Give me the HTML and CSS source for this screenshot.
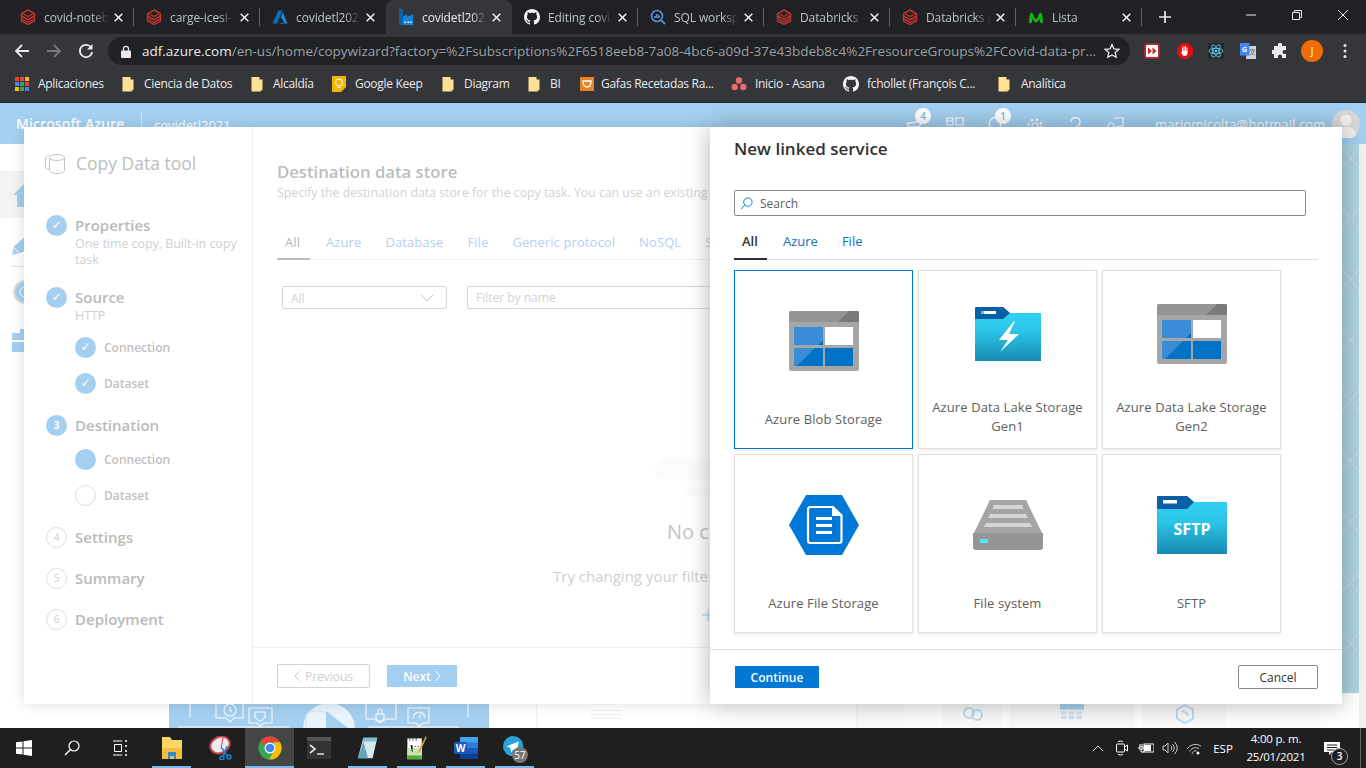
FILE: index.html
```html
<!DOCTYPE html>
<html lang="es">
<head>
<meta charset="utf-8">
<title>Copy Data tool</title>
<link rel="stylesheet" href="styles.css">
</head>
<body>
<svg class="sprite" aria-hidden="true">
  <defs>
    <linearGradient id="folderFill" x1="0" y1="0" x2="0" y2="1"><stop offset="0" stop-color="#32d4f5"/><stop offset=".45" stop-color="#2cc4e8"/><stop offset="1" stop-color="#198ab3"/></linearGradient>
    <symbol id="i-close" viewBox="0 0 9 9"><path d="m.7.7 7.600 7.600M8.300.7.7 8.300" stroke="#e8eaed" stroke-width="1.600"/></symbol>
    <symbol id="i-bricks" viewBox="0 0 16 16"><path d="M8 1 14.500 4.600V7L8 10.600 1.500 7V4.600z" fill="none" stroke="#c8352b" stroke-width="1.500"/><path d="M1.500 7.500v2.200L8 13.300l6.500-3.600V7.500M1.500 10.200v2L8 15.400l6.500-3.200v-2" fill="none" stroke="#c8352b" stroke-width="1.300"/><path d="M3 4.700 8 7.500l5-2.800" fill="none" stroke="#c8352b" stroke-width="1.200"/></symbol>
    <symbol id="i-azure" viewBox="0 0 16 16"><path d="M6.300 1.500h4L5.200 14.500H.5z" fill="#0a6cc0"/><path d="M10.800 3 15.500 14.500H6.500l6-1.200L8.700 8.500z" fill="#1e88d8"/></symbol>
    <symbol id="i-factory" viewBox="0 0 16 16"><path d="M1 0h4v7.500L9 5v3l6-3v11H1z" fill="#1382d8"/><path d="M1 0h4v16H1z" fill="#0c62a8"/><path d="M6.500 12.500h1.500V14H6.500zM9.500 12.500H11V14H9.500zM12 12.500h1.500V14H12z" fill="#fff"/></symbol>
    <symbol id="i-github" viewBox="0 0 16 16"><path fill="#f1f3f4" d="M8 0C3.580 0 0 3.580 0 8c0 3.540 2.290 6.530 5.470 7.590.4.070.55-.17.55-.38 0-.19-.01-.82-.01-1.490-2.010.37-2.530-.49-2.690-.94-.09-.23-.48-.94-.82-1.130-.28-.15-.68-.52-.01-.53.63-.01 1.080.58 1.230.82.72 1.210 1.870.87 2.330.66.070-.52.28-.87.51-1.070-1.780-.2-3.640-.89-3.640-3.950 0-.87.31-1.590.82-2.150-.08-.2-.36-1.020.08-2.120 0 0 .67-.21 2.200.82.64-.18 1.320-.27 2-.27s1.360.09 2 .27c1.530-1.040 2.200-.82 2.200-.82.44 1.100.16 1.920.08 2.120.51.56.82 1.270.82 2.150 0 3.070-1.870 3.750-3.650 3.950.29.25.54.73.54 1.480 0 1.070-.01 1.930-.01 2.200 0 .21.15.46.55.38A8.010 8.010 0 0 0 16 8c0-4.420-3.580-8-8-8z"/></symbol>
    <symbol id="i-sql" viewBox="0 0 16 16"><circle cx="7" cy="7" r="5.500" fill="none" stroke="#5a8fe0" stroke-width="1.600"/><path d="m11 11 4 4" stroke="#5a8fe0" stroke-width="1.800"/><path d="M5 9V7M7 9V5M9 9V6.500" stroke="#8ab4f8" stroke-width="1.200"/></symbol>
    <symbol id="i-movistar" viewBox="0 0 16 16"><path d="M1 13.500C1 8 2 3.500 3.500 3.500 5.500 3.500 6 10 8 10s2.500-6.500 4.500-6.500C14 3.500 15 8 15 13.500c0 1-2.500 1-2.800 0-.2-1.500-.4-3-.7-4-.5 1.500-1.500 4-3.500 4s-3-2.500-3.500-4c-.3 1-.5 2.500-.7 4-.3 1-2.800 1-2.800 0z" fill="#12b312"/></symbol>
    <symbol id="i-folder" viewBox="0 0 12 16"><path d="M.5 1h8v2.500h3v10l-2 2H.5z" fill="#fde293"/><path d="M9.500 15.500v-2h2z" fill="#c9a94f"/></symbol>
    <symbol id="i-blob" viewBox="0 0 70 60"><rect width="70" height="60" rx="2" fill="#a5a6a7"/><path d="M2 0h66a2 2 0 0 1 2 2v9H0V2a2 2 0 0 1 2-2z" fill="#959595"/><path d="M60 0h8a2 2 0 0 1 2 2v9H49z" fill="#7a7a7a"/><rect x="5" y="16" width="29" height="18" fill="#3b8cd6"/><path d="M34 29v5h-5z" fill="#0072c6"/><rect x="36" y="16" width="28" height="18" fill="#fff"/><rect x="5" y="37" width="29" height="18" fill="#0072c6"/><rect x="36" y="37" width="28" height="18" fill="#0072c6"/><path d="M5 37h21L8 55H5z" fill="#3b8cd6"/></symbol>
    <symbol id="i-lake" viewBox="0 0 66 54"><path d="M0 0h28l7 6h31v48H0z" fill="url(#folderFill)"/><path d="M1 0h27l7 6-7 6H0V1z" fill="#0a5ea6"/><rect x="6" y="4" width="3" height="3" fill="#32d4f5"/><rect x="9" y="4" width="12" height="3" fill="#fff"/><path d="M39 14 24 33h9l-8 12 19-18h-10l6-13z" fill="#fff"/></symbol>
    <symbol id="i-hex" viewBox="0 0 70 60"><path d="M17 0h36l17 30-17 30H17L0 30z" fill="#0078d7"/><path d="M19 14.500a2.500 2.500 0 0 1 2.500-2.500H44l8.500 8.500V45.500A2.500 2.500 0 0 1 50 48H21.500A2.500 2.500 0 0 1 19 45.500z" fill="none" stroke="#fff" stroke-width="2.200"/><path d="M27 22h16v3H27zM27 29h16v3H27zM27 36h16v3H27z" fill="#fff"/><path d="M43 12v9h9.500" fill="#fff"/></symbol>
    <symbol id="i-disk" viewBox="0 0 70 50"><path d="M16 2a2 2 0 0 1 2-2h34a2 2 0 0 1 2 2l16 33H0z" fill="#a4a5a6"/><path d="M0 33h70v14a3 3 0 0 1-3 3H3a3 3 0 0 1-3-3z" fill="#959595"/><path d="M21 5h28l1.500 4h-31zM17 14h36l2 4H15zM13 23h44l2 4H11z" fill="#d6d6d6"/><rect x="7" y="39" width="8" height="4" fill="#50e6ff"/></symbol>
    <symbol id="i-sftp" viewBox="0 0 70 58"><path d="M0 0h30l7 6h33v52H0z" fill="url(#folderFill)"/><path d="M1 0h29l7 6-7 7H0V1z" fill="#0a5ea6"/><rect x="6" y="4" width="14" height="3.500" fill="#fff"/></symbol>
  </defs>
</svg>

<nav class="tabstrip">
  <div class="tab"><svg class="fav"><use href="#i-bricks"/></svg><span class="tab-title">covid-noteb</span><svg class="tab-x"><use href="#i-close"/></svg></div>
  <div class="tab"><svg class="fav"><use href="#i-bricks"/></svg><span class="tab-title">carge-icesi-</span><svg class="tab-x"><use href="#i-close"/></svg></div>
  <div class="tab tab-before-active"><svg class="fav"><use href="#i-azure"/></svg><span class="tab-title">covidetl202</span><svg class="tab-x"><use href="#i-close"/></svg></div>
  <div class="tab tab-active"><svg class="fav"><use href="#i-factory"/></svg><span class="tab-title">covidetl202</span><svg class="tab-x"><use href="#i-close"/></svg></div>
  <div class="tab"><svg class="fav"><use href="#i-github"/></svg><span class="tab-title">Editing covi</span><svg class="tab-x"><use href="#i-close"/></svg></div>
  <div class="tab"><svg class="fav"><use href="#i-sql"/></svg><span class="tab-title">SQL worksp</span><svg class="tab-x"><use href="#i-close"/></svg></div>
  <div class="tab"><svg class="fav"><use href="#i-bricks"/></svg><span class="tab-title">Databricks -</span><svg class="tab-x"><use href="#i-close"/></svg></div>
  <div class="tab"><svg class="fav"><use href="#i-bricks"/></svg><span class="tab-title">Databricks (</span><svg class="tab-x"><use href="#i-close"/></svg></div>
  <div class="tab"><svg class="fav"><use href="#i-movistar"/></svg><span class="tab-title">Lista</span><svg class="tab-x"><use href="#i-close"/></svg></div>
  <svg class="new-tab" viewBox="0 0 12 12"><path d="M6 0v12M0 6h12" stroke="#e8eaed" stroke-width="1.700"/></svg>
  <div class="winctl">
    <svg viewBox="0 0 12 12"><path d="M1 6h10" stroke="#e8eaed"/></svg>
    <svg viewBox="0 0 12 12"><path d="M1.500 3.500h7v7h-7zM3.500 3.500v-2h7v7h-2" fill="none" stroke="#e8eaed"/></svg>
    <svg viewBox="0 0 12 12"><path d="m1 1 10 10M11 1 1 11" stroke="#e8eaed"/></svg>
  </div>
</nav>

<div class="toolbar">
  <svg class="nav-btn" viewBox="0 0 16 16"><path d="M15 8H2M8 2 2 8l6 6" fill="none" stroke="#e8eaed" stroke-width="1.800"/></svg>
  <svg class="nav-btn" viewBox="0 0 16 16"><path d="M1 8h13M8 2l6 6-6 6" fill="none" stroke="#77797d" stroke-width="1.800"/></svg>
  <svg class="nav-btn" viewBox="0 0 16 16"><path d="M13.500 5A6.200 6.200 0 1 0 14.200 9" fill="none" stroke="#e8eaed" stroke-width="1.800"/><path d="M14.500 1v5.500H9z" fill="#e8eaed"/></svg>
  <div class="omnibox">
    <svg class="lock" viewBox="0 0 10 13"><path d="M2.500 6V3.800a2.500 2.500 0 0 1 5 0V6" fill="none" stroke="#e8eaed" stroke-width="1.300"/><rect y="5.500" width="10" height="7.500" rx="1" fill="#e8eaed"/></svg>
    <div class="url"><b>adf.azure.com</b>/en-us/home/copywizard?factory=%2Fsubscriptions%2F6518eeb8-7a08-4bc6-a09d-37e43bdeb8c4%2FresourceGroups%2FCovid-data-pr...</div>
    <svg class="star" viewBox="0 0 16 16"><path d="m8 1.500 2 4.400 4.800.5-3.600 3.200 1 4.700L8 11.900l-4.200 2.400 1-4.700L1.200 6.400 6 5.900z" fill="none" stroke="#e8eaed" stroke-width="1.300"/></svg>
  </div>
  <div class="ext">
    <svg viewBox="0 0 16 16"><rect x="1" y="1" width="14" height="14" rx="2" fill="#fff" stroke="#a92a2a" stroke-width="2"/><path d="M4 4.500 8 8l-4 3.500zM8.500 4.500l4 3.500-4 3.500z" fill="#c62828"/></svg>
    <svg viewBox="0 0 16 16"><path d="M5 0h6l5 5v6l-5 5H5l-5-5V5z" fill="#e01010"/><path d="M5 8V4.500h1V8h.5V3h1v5H8V3.200h1V8h.5V4.500h1V10c0 2-1 3-2.700 3C6 13 5.500 12 3.800 9.500L5 9z" fill="#fff"/></svg>
    <svg viewBox="0 0 16 16"><rect width="16" height="16" fill="#23272a"/><g fill="none" stroke="#61dafb" stroke-width=".8"><ellipse cx="8" cy="8" rx="7" ry="2.700"/><ellipse cx="8" cy="8" rx="7" ry="2.700" transform="rotate(60 8 8)"/><ellipse cx="8" cy="8" rx="7" ry="2.700" transform="rotate(120 8 8)"/></g><circle cx="8" cy="8" r="1.300" fill="#61dafb"/></svg>
    <svg viewBox="0 0 16 16"><path d="M7 3h9v13H6z" fill="#d0d4d8"/><path d="M0 0h9.500v12.500H0z" fill="#4285f4"/><text x="2" y="9" class="ext-g">G</text><path d="M10 7h5M12.500 6v1.500M14 8c-.5 2-2 3.500-3.500 4M11 8.500c.5 1.500 2 3 3.500 3.500" stroke="#6b7075" fill="none"/></svg>
    <svg viewBox="0 0 16 16"><path d="M6 1.500a2 2 0 0 1 4 0V3h4v4h-1.500a2 2 0 0 0 0 4H14v4H10v-1.500a2 2 0 0 0-4 0V15H2v-4H.5a2 2 0 0 1 0-4H2V3h4z" fill="#e8eaed"/></svg>
    <span class="avatar-j">J</span>
    <svg viewBox="0 0 16 16"><circle cx="8" cy="2.500" r="1.500" fill="#e8eaed"/><circle cx="8" cy="8" r="1.500" fill="#e8eaed"/><circle cx="8" cy="13.500" r="1.500" fill="#e8eaed"/></svg>
  </div>
</div>

<div class="bookmarks">
  <div class="bm"><svg class="bm-apps" viewBox="0 0 14 14"><g><rect width="4" height="4" fill="#ea4335"/><rect x="5" width="4" height="4" fill="#ea4335"/><rect x="10" width="4" height="4" fill="#fbbc04"/><rect y="5" width="4" height="4" fill="#4285f4"/><rect x="5" y="5" width="4" height="4" fill="#34a853"/><rect x="10" y="5" width="4" height="4" fill="#ea4335"/><rect y="10" width="4" height="4" fill="#fbbc04"/><rect x="5" y="10" width="4" height="4" fill="#34a853"/><rect x="10" y="10" width="4" height="4" fill="#4285f4"/></g></svg><span>Aplicaciones</span></div>
  <div class="bm"><svg class="bm-folder"><use href="#i-folder"/></svg><span>Ciencia de Datos</span></div>
  <div class="bm"><svg class="bm-folder"><use href="#i-folder"/></svg><span>Alcaldía</span></div>
  <div class="bm"><svg class="bm-ico" viewBox="0 0 16 16"><path d="M1 1a1 1 0 0 1 1-1h12a1 1 0 0 1 1 1v10l-5 5H2a1 1 0 0 1-1-1z" fill="#f5b400"/><circle cx="8" cy="6.500" r="3.500" fill="none" stroke="#fff"/><path d="M6.500 11.500h3" stroke="#fff"/></svg><span>Google Keep</span></div>
  <div class="bm"><svg class="bm-folder"><use href="#i-folder"/></svg><span>Diagram</span></div>
  <div class="bm"><svg class="bm-folder"><use href="#i-folder"/></svg><span>BI</span></div>
  <div class="bm"><svg class="bm-ico bm-ico-glass" viewBox="0 0 14 16"><path d="M0 1h14v14H0z" fill="#e8832a"/><path d="M3 5h8c0 4-1.500 6-4 6S3 9 3 5z" fill="none" stroke="#fff" stroke-width="1.300"/></svg><span>Gafas Recetadas Ra...</span></div>
  <div class="bm"><svg class="bm-ico" viewBox="0 0 16 16"><circle cx="8" cy="4.500" r="3.200" fill="#f06a6a"/><circle cx="3.700" cy="11" r="3.200" fill="#f06a6a"/><circle cx="12.300" cy="11" r="3.200" fill="#f06a6a"/></svg><span>Inicio - Asana</span></div>
  <div class="bm"><svg class="bm-ico"><use href="#i-github"/></svg><span>fchollet (François C...</span></div>
  <div class="bm"><svg class="bm-folder bm-folder-last"><use href="#i-folder"/></svg><span>Analítica</span></div>
</div>

<main class="app">
  <header class="az-header">
    <strong class="az-brand">Microsoft Azure</strong>
    <span class="az-factory">covidetl2021</span>
    <div class="az-tools">
      <span class="tool"><svg viewBox="0 0 18 18"><path d="M1 6.500 16 4l-3 6H3zM3 13h10" fill="none" stroke="#fff" stroke-width="1.300"/></svg><em class="badge">4</em></span>
      <span class="tool"><svg viewBox="0 0 18 18"><path d="M1 1h6v7H1zM1 4h6M10 1h7v7h-7zM1 11h7v6H1zM11 11h6v6h-6z" fill="none" stroke="#fff" stroke-width="1.200"/></svg></span>
      <span class="tool"><svg viewBox="0 0 18 18"><path d="M3.500 18V6a5.500 5.500 0 0 1 11 0v12" fill="none" stroke="#fff" stroke-width="1.300"/></svg><em class="badge">1</em></span>
      <span class="tool"><svg viewBox="0 0 18 18"><circle cx="9" cy="9" r="3" fill="none" stroke="#fff" stroke-width="1.200"/><circle cx="9" cy="9" r="6.500" fill="none" stroke="#fff" stroke-width="2.200" stroke-dasharray="2.500 2.600"/></svg></span>
      <span class="tool"><svg viewBox="0 0 18 18"><path d="M5 5a4.500 4.500 0 1 1 6.500 4C10 10 9 11 9 14" fill="none" stroke="#fff" stroke-width="1.300"/></svg></span>
      <span class="tool"><svg viewBox="0 0 18 18"><path d="M8 1h9v8h-4l-2 2V9" fill="none" stroke="#fff" stroke-width="1.200"/><circle cx="5" cy="9" r="3" fill="none" stroke="#fff" stroke-width="1.200"/><path d="M1 17c0-3 2-4 4-4s4 1 4 4" fill="none" stroke="#fff" stroke-width="1.200"/></svg></span>
    </div>
    <span class="az-user">mariomicolta@hotmail.com</span>
    <svg class="az-avatar" viewBox="0 0 28 28"><circle cx="14" cy="14" r="14" fill="#d8d8d8"/><circle cx="14" cy="10" r="5.500" fill="#f0f0f0"/><path d="M4 25c1-7 5-8 10-8s9 1 10 8a14 14 0 0 1-20 0z" fill="#f0f0f0"/></svg>
  </header>
  <div class="az-body">
    <div class="rail">
      <div class="rail-item rail-home"><svg viewBox="0 0 26 24"><path d="M13 0 26 12h-4v12H5V12H1z" fill="#a4cff0"/></svg></div>
      <div class="rail-item rail-edit"><svg viewBox="0 0 26 18"><path d="M0 18 2 9 13 0h13v9L8 16z" fill="#a4cff0"/><path d="M2 10.500 7 16" stroke="#fff"/></svg></div>
      <div class="rail-item rail-mon"><svg viewBox="0 0 26 24"><circle cx="13" cy="12" r="11" fill="#a4cff0" stroke="#ddd" stroke-width="2"/><circle cx="13" cy="12" r="5" fill="none" stroke="#fff"/></svg></div>
      <div class="rail-item rail-case"><svg viewBox="0 0 26 24"><path d="M0 5h8V1h10v4h8v19H0z" fill="#a4cff0"/><path d="M0 13h26" stroke="#fff" stroke-width="2"/></svg></div>
    </div>
    <div class="home">
      <div class="home-strip">
        <div class="home-white"></div>
        <svg class="home-hero" viewBox="0 0 320 24"><rect width="320" height="24" fill="#a4cff0"/><g fill="none" stroke="#fff" stroke-width="1.100" opacity=".9"><path d="M21 0v13M299 0v13M47 0v14h10l4 4 4-4h9V0M80 4h23v15h-8l-4 3-3-3h-8zM197 0v15h10l4 4 4-4h12V0M239 4h21v15h-6l-4 3-3-3h-8zM10 24v-1h110M200 24v-1h90"/><circle cx="61" cy="6" r="6"/><path d="M61 3v3l2 2M86 8h10v4c0 3-3 4-5 5-2-1-5-2-5-5zM207 10h8v7h-8zM209 10V7a2 2 0 0 1 4 0v3M244 14a6 6 0 0 1 12 0M250 14l2-4"/></g><circle cx="160" cy="25" r="26" fill="#e8f3fc"/><path d="M137 10v14M158 10v14M137 10c2-4 19-4 21 0" stroke="#cfe4f5" fill="none"/><path d="M157 7 179 24h-22z" fill="#a4cff0"/></svg>
        <div class="home-card home-card-a"><i></i><i></i><i></i></div>
        <div class="home-card home-card-b"></div>
        <div class="home-card home-card-c"><svg viewBox="0 0 24 14"><circle cx="8" cy="6" r="5" fill="none" stroke="#bcdcf3" stroke-width="2"/><circle cx="16" cy="8" r="5" fill="none" stroke="#bcdcf3" stroke-width="2"/></svg></div>
        <div class="home-card home-card-d"><svg viewBox="0 0 22 18"><rect width="22" height="5" fill="#a8d0ee"/><path d="M1 8h20M1 12h20" stroke="#cfe4f5" stroke-width="3" stroke-dasharray="5 2"/></svg></div>
        <div class="home-card home-card-e"><svg viewBox="0 0 18 20"><path d="M9 1 17 5.500v9L9 19 1 14.500v-9z" fill="none" stroke="#bcdcf3" stroke-width="2"/><path d="M6 8c3-2 6 3 6 4" fill="none" stroke="#bcdcf3" stroke-width="2"/></svg></div>
      </div>
    </div>
    <div class="teal"></div>
    <div class="page-scroll"></div>
  </div>

  <section class="wizard">
    <div class="wiz-side">
      <div class="wiz-title"><svg viewBox="0 0 20 21"><ellipse cx="12" cy="4.500" rx="7.500" ry="3" fill="#fff" stroke="#c4c4c4"/><path d="M4.500 4.500v13c0 1.600 3.300 3 7.500 3s7.500-1.400 7.500-3v-13" fill="none" stroke="#c4c4c4"/><path d="M4 2.500C2 3 .5 3.500.5 5v9c0 1 1.500 2 4 2.500" fill="none" stroke="#c4c4c4"/></svg><span>Copy Data tool</span></div>
      <div class="step step-first"><span class="dot dot-done">✓</span><b>Properties</b></div>
      <p class="step-sub">One time copy, Built-in copy task</p>
      <div class="step step-source"><span class="dot dot-done">✓</span><b>Source</b></div>
      <p class="step-sub">HTTP</p>
      <div class="sub-step sub-step-first"><span class="dot dot-done">✓</span><span>Connection</span></div>
      <div class="sub-step"><span class="dot dot-done">✓</span><span>Dataset</span></div>
      <div class="step step-next"><span class="dot dot-now">3</span><b>Destination</b></div>
      <div class="sub-step sub-step-first"><span class="dot dot-fill"></span><span>Connection</span></div>
      <div class="sub-step"><span class="dot dot-empty"></span><span>Dataset</span></div>
      <div class="step step-next"><span class="dot dot-empty">4</span><b>Settings</b></div>
      <div class="step step-tail"><span class="dot dot-empty">5</span><b>Summary</b></div>
      <div class="step step-tail"><span class="dot dot-empty">6</span><b>Deployment</b></div>
    </div>
    <div class="wiz-main">
      <div class="wiz-body">
        <h2 class="wiz-h">Destination data store</h2>
        <p class="wiz-desc">Specify the destination data store for the copy task. You can use an existing</p>
        <div class="wiz-tabs"><span class="wt wt-on">All</span><span class="wt">Azure</span><span class="wt">Database</span><span class="wt">File</span><span class="wt">Generic protocol</span><span class="wt">NoSQL</span><span class="wt">S</span></div>
        <div class="wiz-filters">
          <div class="sel"><span>All</span><svg viewBox="0 0 14 8"><path d="m1 1 6 6 6-6" fill="none" stroke="#c4c4c4"/></svg></div>
          <div class="flt">Filter by name</div>
        </div>
        <div class="ghost"></div>
        <div class="ghost-2"></div>
        <p class="empty-a">No c</p>
        <p class="empty-b">Try changing your filte</p>
        <svg class="empty-plus" viewBox="0 0 12 12"><path d="M6 0v12M0 6h12" stroke="#a4cff0"/></svg>
      </div>
      <div class="wiz-foot">
        <span class="btn-prev"><svg viewBox="0 0 6 12"><path d="M5.500 1 1 6l4.500 5" fill="none" stroke="#c8c8c8"/></svg>Previous</span>
        <span class="btn-next">Next<svg viewBox="0 0 6 12"><path d="M.5 1 5 6l-4.500 5" fill="none" stroke="#fff"/></svg></span>
      </div>
    </div>
  </section>

  <aside class="blade">
    <div class="blade-body">
      <h1 class="blade-h">New linked service</h1>
      <div class="search"><svg viewBox="0 0 14 14"><circle cx="8.500" cy="5.500" r="4.500" fill="none" stroke="#0078d4"/><path d="M5 9 1 13" stroke="#0078d4"/></svg><span>Search</span></div>
      <div class="blade-tabs"><span class="bt bt-on">All</span><span class="bt">Azure</span><span class="bt">File</span></div>
      <div class="cards">
        <div class="card card-on"><svg class="ico-blob"><use href="#i-blob"/></svg><span class="card-t">Azure Blob Storage</span></div>
        <div class="card card-two"><svg class="ico-lake"><use href="#i-lake"/></svg><span class="card-t">Azure Data Lake Storage Gen1</span></div>
        <div class="card card-two"><svg class="ico-blob ico-blob-2"><use href="#i-blob"/></svg><span class="card-t">Azure Data Lake Storage Gen2</span></div>
        <div class="card"><svg class="ico-hex"><use href="#i-hex"/></svg><span class="card-t">Azure File Storage</span></div>
        <div class="card"><svg class="ico-disk"><use href="#i-disk"/></svg><span class="card-t">File system</span></div>
        <div class="card"><svg class="ico-sftp" viewBox="0 0 70 58"><use href="#i-sftp"/><text x="35" y="39" class="sftp-t">SFTP</text></svg><span class="card-t">SFTP</span></div>
      </div>
    </div>
    <div class="blade-foot"><span class="btn-go">Continue</span><span class="btn-cancel">Cancel</span></div>
  </aside>
</main>

<footer class="taskbar">
  <div class="tb-cell tb-sys"><svg viewBox="0 0 16 16"><path d="M0 2.300 6.500 1.400V7.500H0zM7.500 1.300 16 0V7.500H7.500zM0 8.500h6.500v6.100L0 13.700zM7.500 8.500H16V16l-8.500-1.200z" fill="#fff"/></svg></div>
  <div class="tb-cell tb-sys"><svg viewBox="0 0 16 16"><circle cx="10" cy="6" r="5" fill="none" stroke="#fff" stroke-width="1.200"/><path d="M6.500 9.500 1 15" stroke="#fff" stroke-width="1.400"/></svg></div>
  <div class="tb-cell tb-sys"><svg viewBox="0 0 16 16"><path d="M1 1h9M1 15h9M2.500 4.500h7v7h-7z" fill="none" stroke="#fff"/><path d="M13 1h2M13 6h2M13 11h2M13 15h2" stroke="#fff" stroke-width="1.500"/></svg></div>
  <div class="tb-app tb-run"><svg viewBox="0 0 24 24"><path d="M2 1h8l2 3h10v19H2z" fill="#fcd462"/><path d="M2 12h20v11H2z" fill="#f4bd3f"/><path d="M8 16h8v7h-2v-3h-4v3H8z" fill="#2d8ecf"/></svg></div>
  <div class="tb-app"><svg viewBox="0 0 24 24"><ellipse cx="11" cy="9" rx="10" ry="8" fill="#eee" stroke="#c8424a" stroke-width="2" transform="rotate(-25 11 9)"/><path d="M14 2 12 13" stroke="#c8424a"/><path d="M13 12 19 21M18 10 14 21" stroke="#1c86d1" stroke-width="1.500"/><circle cx="13" cy="22" r="2" fill="none" stroke="#1c86d1" stroke-width="1.500"/><circle cx="20" cy="21" r="2" fill="none" stroke="#1c86d1" stroke-width="1.500"/></svg></div>
  <div class="tb-app tb-run tb-active"><svg viewBox="0 0 24 24"><circle cx="12" cy="12" r="11.500" fill="#34a853"/><path d="M12 .5a11.500 11.500 0 0 1 10 5.800H12a6 6 0 0 0-5.500 3.500L2.500 5A11.500 11.500 0 0 1 12 .5z" fill="#ea4335"/><path d="M22 6.300A11.500 11.500 0 0 1 11 23.500l5-8.500a6 6 0 0 0-1-8.700z" fill="#fbbc04"/><circle cx="12" cy="12" r="5.500" fill="#fff"/><circle cx="12" cy="12" r="4.300" fill="#4285f4"/></svg></div>
  <div class="tb-app"><svg viewBox="0 0 24 24"><rect y="1" width="24" height="22" rx="1" fill="#333"/><rect y="1" width="24" height="4" fill="#555"/><path d="m3 9 5 4-5 4" fill="none" stroke="#ddd" stroke-width="1.700"/><path d="M10 18h7" stroke="#ddd" stroke-width="1.500"/></svg></div>
  <div class="tb-app tb-run"><svg viewBox="0 0 24 26"><path d="M7 2h15L17 24H1z" fill="#d5e8f0"/><path d="M7 2h15l-1 4H6z" fill="#7cc2da"/><path d="M1 24 7 6l5 18z" fill="#3d8fa8" opacity=".75"/></svg></div>
  <div class="tb-app tb-run"><svg viewBox="0 0 24 30"><rect y="3" width="18" height="26" fill="#fff"/><rect y="24" width="18" height="5" fill="#5ca83d"/><rect y="15" width="18" height="9" fill="#c7e5b6"/><path d="M3 2v4M7 2v4M11 2v4M4 12h2v8M9 13h2M13 13h2" stroke="#333"/><path d="M23 0 14 18l-1 4 3-3L24 2z" fill="#e0a92c"/></svg></div>
  <div class="tb-app tb-run"><svg viewBox="0 0 24 24"><rect x="6" y="1" width="18" height="22" rx="1" fill="#2b7cd3"/><rect x="6" y="1" width="18" height="5.500" fill="#41a5ee"/><rect x="6" y="12" width="18" height="5.500" fill="#185abd"/><rect x="6" y="17.500" width="18" height="5.500" fill="#103f91"/><rect y="6" width="13" height="12" rx="1" fill="#185abd"/><text x="6.500" y="15.500" class="word-w">W</text></svg></div>
  <div class="tb-app tb-run tb-tele"><svg viewBox="0 0 26 26"><circle cx="11" cy="11" r="11" fill="#2aa1da"/><path d="m4 11 13-5-2 12-4-3-2 3-1-5z" fill="#fff"/></svg><em class="tele-badge">57</em></div>
  <div class="tray">
    <svg class="tray-chev" viewBox="0 0 14 8"><path d="m1 7 6-6 6 6" fill="none" stroke="#fff"/></svg>
    <svg class="tray-cam" viewBox="0 0 12 16"><rect x=".5" y="4" width="8" height="8" rx="1" fill="none" stroke="#fff"/><path d="m8.500 7 3-2v6l-3-2M2 1.500a7 7 0 0 1 5 0M2 14.500a7 7 0 0 0 5 0" fill="none" stroke="#fff"/></svg>
    <svg class="tray-w" viewBox="0 0 16 12"><rect x="6" y="2" width="10" height="8" fill="none" stroke="#fff"/><rect x="6" y="3" width="7" height="6" fill="#fff"/><path d="M2 2v3M4 2v3M1 5h4v2H1zM3 7v3h3" stroke="#fff" fill="none"/></svg>
    <svg class="tray-w" viewBox="0 0 16 14"><path d="M1 5h2l3-3v10L3 9H1zM8.500 4.500a3 3 0 0 1 0 5M10.500 3a5.500 5.500 0 0 1 0 8M12.500 1a8 8 0 0 1 0 12" fill="none" stroke="#ccc"/></svg>
    <svg class="tray-w" viewBox="0 0 16 14"><path d="M1 8a10 10 0 0 1 14-3M3.500 10.500A7 7 0 0 1 13 7.500M6 13a3.500 3.500 0 0 1 4.500-3" fill="none" stroke="#bbb"/><circle cx="12" cy="12" r="1.500" fill="#fff"/></svg>
    <span class="tray-lang">ESP</span>
    <span class="clock"><span>4:00 p. m.</span><span>25/01/2021</span></span>
    <span class="notif"><svg viewBox="0 0 16 13"><path d="M0 0h16v10H8l-3 3v-3H0z" fill="#fff"/><path d="M3 3h10M3 5.500h10M3 8h7" stroke="#1f1f1f"/></svg><em class="notif-badge">3</em></span>
  </div>
</footer>
</body>
</html>
```

FILE: styles.css
```css
* { box-sizing: border-box; }
html, body { margin: 0; padding: 0; }
body {
  width: 1366px;
  height: 768px;
  overflow: hidden;
  display: flex;
  flex-direction: column;
  font-family: "Open Sans", "Noto Sans", sans-serif;
  background: #fff;
}
p, h1, h2 { margin: 0; font-weight: inherit; }
em { font-style: normal; }
.sprite { position: absolute; width: 0; height: 0; }

/* tab strip */
.tabstrip {
  height: 34px;
  flex: none;
  display: flex;
  align-items: stretch;
  padding-left: 8px;
  background: #202124;
  position: relative;
}
.tab {
  width: 126px;
  flex: none;
  display: flex;
  align-items: center;
  padding: 0 0 0 12px;
  position: relative;
  color: #bdc1c6;
  font-size: 12px;
}
.tab::after {
  content: "";
  position: absolute;
  right: 0;
  top: 8px;
  bottom: 8px;
  width: 1px;
  background: #5f6368;
}
.tab-before-active::after, .tab-active::after { display: none; }
.tab-active {
  background: #35363a;
  border-radius: 8px 8px 0 0;
  color: #e8eaed;
}
.fav { width: 16px; height: 16px; flex: none; }
.tab-title {
  width: 68px;
  margin-left: 8px;
  white-space: nowrap;
  letter-spacing: -.1px;
  -webkit-mask-image: linear-gradient(90deg, #000 72%, transparent 95%);
  mask-image: linear-gradient(90deg, #000 72%, transparent 95%);
}
.tab-x { width: 9px; height: 9px; margin-left: 2px; flex: none; }
.new-tab { width: 12px; height: 12px; align-self: center; margin-left: 17px; }
.winctl {
  margin-left: auto;
  display: grid;
  grid-template-columns: repeat(3, 46px);
  justify-items: center;
  align-items: center;
  height: 30px;
}
.winctl svg { width: 12px; height: 12px; }

/* toolbar */
.toolbar {
  height: 34px;
  flex: none;
  display: flex;
  align-items: center;
  background: #35363a;
  padding-left: 14px;
}
.nav-btn { width: 16px; height: 16px; margin-right: 16px; flex: none; }
.omnibox {
  margin-left: -2px;
  width: 1022px;
  flex: none;
  height: 28px;
  border-radius: 14px;
  background: #202124;
  display: flex;
  align-items: center;
  padding-left: 13px;
}
.lock { width: 10px; height: 13px; flex: none; }
.url {
  margin-left: 11px;
  width: 948px;
  flex: none;
  color: #9aa0a6;
  font-size: 13.500px;
  white-space: nowrap;
}
.url b { font-weight: 400; color: #e8eaed; }
.star { width: 16px; height: 16px; margin-left: 14px; flex: none; }
.ext {
  display: grid;
  grid-template-columns: 33px 33px 30px 33px 32px 32px 33px;
  justify-items: center;
  align-items: center;
  margin-left: 5px;
}
.ext svg { width: 16px; height: 16px; }
.ext-g { font: 700 7px "Open Sans", sans-serif; fill: #fff; }
.avatar-j {
  width: 22px;
  height: 22px;
  border-radius: 50%;
  background: #ee6c00;
  color: #fff;
  font-size: 10px;
  display: flex;
  align-items: center;
  justify-content: center;
}

/* bookmarks */
.bookmarks {
  height: 35px;
  flex: none;
  display: grid;
  grid-template-columns: 107px 129px 80px 111px 86px 51px 152px 112px 155px 1fr;
  align-items: center;
  padding: 0 0 3px 15px;
  background: #35363a;
  border-bottom: 1px solid #292a2d;
  color: #e8eaed;
  font-size: 12px;
  letter-spacing: -.3px;
}
.bm { display: flex; align-items: center; white-space: nowrap; }
.bm-apps { width: 14px; height: 14px; margin-right: 9px; }
.bm-folder { width: 12px; height: 16px; margin-right: 10px; }
.bm-folder-last { margin-right: 11px; }
.bm-ico { width: 16px; height: 16px; margin-right: 8px; }
.bm-ico-glass { margin-right: 6px; }

/* app */
.app {
  height: 625px;
  flex: none;
  position: relative;
  overflow: hidden;
  display: flex;
  flex-direction: column;
}
.az-header {
  height: 41px;
  flex: none;
  background: #a4cff0;
  color: #fff;
  display: flex;
  align-items: center;
  padding: 0 6px 0 16px;
  font-size: 13px;
}
.az-brand { font-weight: 600; font-size: 14px; width: 125px; white-space: nowrap; letter-spacing: .1px; }
.az-factory {
  padding-left: 12px;
  border-left: 1px solid #d6e9f8;
  height: 24px;
  line-height: 26px;
}
.az-tools {
  margin-left: auto;
  display: grid;
  grid-template-columns: repeat(6, 40px);
  align-items: center;
  justify-items: center;
  margin-right: 20px;
  padding-top: 4px;
}
.tool { width: 18px; height: 18px; position: relative; display: block; }
.tool svg { width: 18px; height: 18px; display: block; }
.badge {
  position: absolute;
  top: -9px;
  left: 9px;
  width: 16px;
  height: 16px;
  border-radius: 50%;
  background: #fff;
  color: #8bb7d8;
  font-size: 10px;
  font-weight: 600;
  line-height: 16px;
  text-align: center;
}
.az-user { white-space: nowrap; width: 174px; letter-spacing: .12px; }
.az-avatar { width: 28px; height: 28px; margin-left: 3px; }

.az-body { flex: 1; display: flex; min-height: 0; }
.rail { width: 48px; flex: none; padding-top: 27px; background: #fff; }
.rail-item { display: flex; padding-left: 12px; }
.rail-item svg { width: 26px; }
.rail-home { height: 47px; background: #f5f3f1; align-items: center; }
.rail-home svg { height: 24px; }
.rail-edit { height: 30px; margin-top: 19px; position: relative; }
.rail-edit::after {
  content: "";
  position: absolute;
  left: 12px;
  right: 0;
  bottom: 0;
  height: 1px;
  background: #e4e4e4;
}
.rail-edit svg { height: 18px; }
.rail-mon { height: 24px; margin-top: 13px; }
.rail-mon svg { height: 24px; }
.rail-case { height: 24px; margin-top: 24px; }
.rail-case svg { height: 24px; }
.home { flex: 1; display: flex; align-items: flex-end; min-width: 0; }
.home-strip { width: 100%; height: 24px; display: flex; background: #fff; }
.home-white { width: 121px; flex: none; }
.home-hero { width: 320px; height: 24px; flex: none; }
.home-card { height: 24px; flex: none; display: flex; justify-content: center; }
.home-card svg { width: 24px; height: 20px; }
.home-card-a {
  width: 321px;
  margin-left: 47px;
  flex-direction: column;
  justify-content: flex-start;
  padding: 6px 0 0 54px;
  border-left: 1px solid #f2f2f2;
  border-right: 1px solid #f6f6f6;
}
.home-card-a i { display: block; width: 30px; height: 1px; background: #ececec; margin-bottom: 3px; }
.home-card-b { width: 47px; background: #fbfbfb; margin-right: 39px; }
.home-card-c { width: 59px; background: #fafafa; margin-right: 8px; }
.home-card-d { width: 124px; background: #f9f9f9; margin-right: 9px; }
.home-card-e { width: 83px; background: #fafafa; }
.teal {
  width: 17px;
  height: 549px;
  flex: none;
  background-color: #aed3df;
  background-image:
    repeating-linear-gradient(50deg, transparent 0 38px, rgba(255, 255, 255, .22) 38px 39px),
    repeating-linear-gradient(-50deg, transparent 0 38px, rgba(255, 255, 255, .22) 38px 39px);
}
.page-scroll { width: 7px; flex: none; background: #f1f1f1; }

/* wizard (floats over the page) */
.wizard {
  position: absolute;
  left: 24px;
  top: 24px;
  width: 686px;
  height: 577px;
  background: #fff;
  box-shadow: 0 0 12px rgba(0, 0, 0, .14);
  display: flex;
  overflow: hidden;
}
.wiz-side {
  width: 229px;
  flex: none;
  border-right: 1px solid #eee;
  padding: 17px 0 0 22px;
}
.wiz-title {
  height: 40px;
  display: flex;
  align-items: center;
  padding-bottom: 2px;
  color: #bdbdbd;
  font-size: 17.500px;
}
.wiz-title svg { width: 20px; height: 21px; margin-right: 11px; margin-left: -1px; }
.step, .sub-step { display: flex; align-items: center; height: 22px; }
.step b { font-weight: 600; font-size: 15px; color: #bababa; margin-left: 8px; }
.sub-step { margin: 14px 0 0 29px; }
.sub-step span:last-child { font-size: 12px; color: #bfbfbf; margin-left: 8px; font-weight: 600; }
.sub-step-first { margin-top: 12px; }
.step-first { margin-top: 30px; }
.step-source { margin-top: 18px; }
.step-next { margin-top: 20px; }
.step-tail { margin-top: 19px; }
.dot {
  width: 21px;
  height: 21px;
  flex: none;
  border-radius: 50%;
  display: flex;
  align-items: center;
  justify-content: center;
  font-size: 10px;
  color: #fff;
}
.dot-done { background: #a4cff0; font-size: 12px; font-family: "DejaVu Sans", sans-serif; }
.dot-now { background: #a4cff0; font-weight: 700; }
.dot-fill { background: #a4cff0; }
.dot-empty { background: #fff; border: 1px solid #dcdcdc; color: #cfcfcf; }
.step-sub {
  margin-left: 29px;
  width: 172px;
  font-size: 12.400px;
  line-height: 16px;
  color: #cfcfcf;
}

.wiz-main { flex: 1; min-width: 0; display: flex; flex-direction: column; }
.wiz-body { flex: 1; padding: 33px 0 0 24px; min-height: 0; overflow: hidden; }
.wiz-h { font-size: 16.700px; font-weight: 600; color: #bdbdbd; line-height: 24px; white-space: nowrap; }
.wiz-desc { margin-top: 1px; font-size: 12.300px; color: #d2d2d2; line-height: 16px; white-space: nowrap; }
.wiz-tabs {
  margin-top: 23px;
  height: 36px;
  display: flex;
  align-items: center;
  border-bottom: 1px solid #f0f0f0;
  font-size: 13px;
  letter-spacing: .1px;
  white-space: nowrap;
  color: #b4cff2;
  width: 433px;
}
.wt { margin-right: 24px; flex: none; }
.wt-on {
  color: #b7b7b7;
  height: 36px;
  line-height: 36px;
  width: 33px;
  padding-left: 8px;
  margin-right: 16px;
  border-bottom: 2px solid #bbb;
}
.wiz-filters { display: flex; margin: 26px 0 0 5px; font-size: 12px; color: #d2d2d2; }
.sel, .flt {
  height: 23px;
  flex: none;
  border: 1px solid #d6d6d6;
  border-radius: 2px;
  display: flex;
  align-items: center;
  padding-left: 8px;
}
.sel { width: 165px; justify-content: space-between; padding-right: 12px; }
.sel span { padding-top: 2px; }
.sel svg { width: 14px; height: 8px; }
.flt { margin-left: 20px; width: 300px; }
.ghost { width: 60px; height: 21px; border-radius: 10px; background: #fbfbfb; margin: 150px 0 0 378px; }
.ghost-2 { width: 40px; height: 9px; border-radius: 4px; background: #fcfcfc; margin: 7px 0 0 407px; }
.empty-a { margin: 22px 0 0 390px; font-size: 20px; line-height: 28px; color: #c4c4c4; white-space: nowrap; }
.empty-b { margin: 20px 0 0 276px; font-size: 15px; line-height: 20px; color: #cfcfcf; white-space: nowrap; }
.empty-plus { display: block; width: 12px; height: 12px; margin: 23px 0 0 425px; }
.wiz-foot {
  height: 57px;
  flex: none;
  border-top: 1px solid #eee;
  display: flex;
  align-items: center;
  padding-left: 24px;
  font-size: 12px;
}
.btn-prev {
  width: 93px;
  height: 24px;
  border: 1px solid #d4d4d4;
  border-radius: 1px;
  color: #cfcfcf;
  display: flex;
  align-items: center;
  justify-content: center;
}
.btn-prev svg { width: 6px; height: 12px; margin-right: 5px; }
.btn-next {
  width: 70px;
  height: 22px;
  margin-left: 17px;
  background: #a4cff0;
  color: #fff;
  font-weight: 600;
  display: flex;
  align-items: center;
  justify-content: center;
}
.btn-next svg { width: 6px; height: 12px; margin-left: 4px; }

/* blade (floats over the wizard) */
.blade {
  position: absolute;
  left: 710px;
  top: 24px;
  width: 632px;
  height: 577px;
  background: #fff;
  box-shadow: 0 0 22px rgba(0, 0, 0, .3);
  display: flex;
  flex-direction: column;
}
.blade-body { flex: 1; padding: 8px 24px 0; min-height: 0; }
.blade-h { font-size: 17px; font-weight: 600; color: #323130; line-height: 28px; }
.search {
  margin-top: 27px;
  width: 572px;
  height: 26px;
  border: 1px solid #8a8886;
  border-radius: 2px;
  display: flex;
  align-items: center;
  padding-left: 5px;
  font-size: 12px;
  color: #605e5c;
}
.search svg { width: 13px; height: 13px; margin-right: 7px; }
.blade-tabs {
  margin-top: 12px;
  height: 32px;
  width: 584px;
  display: flex;
  border-bottom: 1px solid #e1dfdd;
  font-size: 13px;
  color: #106ebe;
}
.bt { margin-right: 24px; height: 32px; line-height: 27px; }
.bt-on {
  color: #323130;
  font-weight: 600;
  width: 33px;
  padding-left: 8px;
  margin-right: 16px;
  border-bottom: 2px solid #323130;
}
.cards {
  margin-top: 10px;
  display: grid;
  grid-template-columns: repeat(3, 179px);
  grid-auto-rows: 179px;
  gap: 5px;
}
.card {
  position: relative;
  display: flex;
  flex-direction: column;
  align-items: center;
  border: 1px solid #e1dfdd;
  box-shadow: 0 1px 3px rgba(0, 0, 0, .1);
  background: #fff;
  padding: 0 16px;
}
.card-on { border-color: #0078d4; }
.card svg { flex: none; }
.ico-blob { width: 70px; height: 60px; margin-top: 40px; }
.ico-blob-2 { margin-top: 33px; }
.ico-lake { width: 66px; height: 54px; margin-top: 36px; }
.ico-hex { width: 70px; height: 60px; margin-top: 40px; }
.ico-disk { width: 70px; height: 50px; margin-top: 45px; }
.ico-sftp { width: 70px; height: 58px; margin-top: 41px; }
.sftp-t { font: 700 16px "Open Sans", sans-serif; fill: #fff; text-anchor: middle; }
.card-t {
  position: absolute;
  left: 10px;
  right: 10px;
  top: 139px;
  text-align: center;
  font-size: 13px;
  letter-spacing: .1px;
  line-height: 19px;
  color: #605e5c;
}
.card-two .card-t { top: 127px; }
.blade-foot {
  height: 55px;
  flex: none;
  border-top: 1px solid #e1dfdd;
  display: flex;
  align-items: center;
  justify-content: space-between;
  padding: 0 24px 0 25px;
  font-size: 12px;
}
.btn-go {
  width: 84px;
  height: 22px;
  background: #0078d4;
  color: #fff;
  font-weight: 600;
  display: flex;
  align-items: center;
  justify-content: center;
}
.btn-cancel {
  width: 80px;
  height: 24px;
  border: 1px solid #8a8886;
  border-radius: 2px;
  color: #323130;
  display: flex;
  align-items: center;
  justify-content: center;
}

/* taskbar */
.taskbar {
  height: 40px;
  flex: none;
  background: #1f1f1f;
  display: flex;
  align-items: stretch;
  color: #fff;
}
.tb-cell { width: 48px; flex: none; display: flex; align-items: center; justify-content: center; }
.tb-cell svg { width: 16px; height: 16px; }
.tb-app {
  width: 49px;
  display: flex;
  align-items: center;
  justify-content: center;
  position: relative;
  flex: none;
}
.tb-app svg { width: 24px; height: 24px; }
.tb-run::after {
  content: "";
  position: absolute;
  left: 5px;
  right: 5px;
  bottom: 0;
  height: 2px;
  background: #76b9ed;
}
.tb-active { background: #454545; }
.tb-active::after { left: 0; right: 0; }
.tb-sys + .tb-app { margin-left: 3px; }
.word-w { font: 700 10px "Open Sans", sans-serif; fill: #fff; text-anchor: middle; }
.tele-badge {
  position: absolute;
  left: 22px;
  bottom: 5px;
  width: 16px;
  height: 16px;
  border-radius: 50%;
  background: #777;
  color: #fff;
  font-size: 10px;
  line-height: 16px;
  text-align: center;
}
.tray {
  margin-left: auto;
  display: grid;
  grid-template-columns: repeat(5, 24px) 34px 72px 40px;
  justify-items: center;
  align-items: center;
  padding-right: 8px;
  border-right: 1px solid #666;
  margin-right: 5px;
  height: 100%;
}
.tray-chev { width: 12px; height: 7px; }
.tray-cam { width: 12px; height: 16px; }
.tray-w { width: 16px; height: 14px; }
.tray-lang { font-size: 11.500px; }
.clock {
  display: flex;
  flex-direction: column;
  align-items: center;
  font-size: 11.500px;
  letter-spacing: -.2px;
  line-height: 18px;
  white-space: nowrap;
}
.notif { position: relative; width: 16px; height: 13px; display: block; }
.notif svg { width: 16px; height: 13px; display: block; }
.notif-badge {
  position: absolute;
  left: 7px;
  top: 6px;
  width: 17px;
  height: 17px;
  border-radius: 50%;
  background: #1f1f1f;
  border: 1px solid #aaa;
  font-size: 10px;
  font-weight: 600;
  line-height: 15px;
  text-align: center;
}
```
